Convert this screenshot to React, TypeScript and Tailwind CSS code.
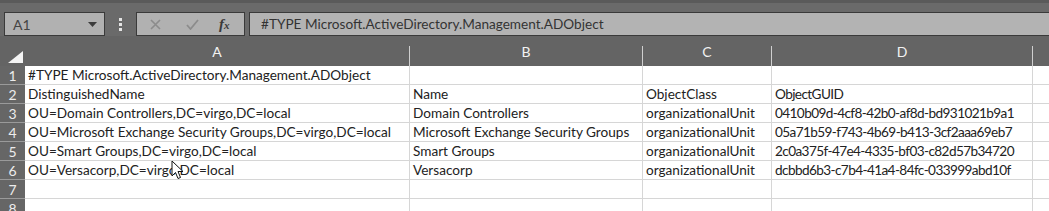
import React from 'react'

const cols = [
  { key: 'A', w: 'w-[385px]', t: '' },
  { key: 'B', w: 'w-[233px]', t: '' },
  { key: 'C', w: 'w-[129px]', t: '' },
  { key: 'D', w: 'w-[261px]', t: 'tracking-[-0.6px]' },
]

const rows: string[][] = [
  ['#TYPE Microsoft.ActiveDirectory.Management.ADObject', '', '', ''],
  ['DistinguishedName', 'Name', 'ObjectClass', 'ObjectGUID'],
  ['OU=Domain Controllers,DC=virgo,DC=local', 'Domain Controllers', 'organizationalUnit', '0410b09d-4cf8-42b0-af8d-bd931021b9a1'],
  ['OU=Microsoft Exchange Security Groups,DC=virgo,DC=local', 'Microsoft Exchange Security Groups', 'organizationalUnit', '05a71b59-f743-4b69-b413-3cf2aaa69eb7'],
  ['OU=Smart Groups,DC=virgo,DC=local', 'Smart Groups', 'organizationalUnit', '2c0a375f-47e4-4335-bf03-c82d57b34720'],
  ['OU=Versacorp,DC=virgo,DC=local', 'Versacorp', 'organizationalUnit', 'dcbbd6b3-c7b4-41a4-84fc-033999abd10f'],
  ['', '', '', ''],
  ['', '', '', ''],
]

function FormulaBar() {
  return (
    <div className="flex h-[36px] bg-[#6a6a6a] pt-[9px] border-t-[3px] border-[#5a5a5a]">
      {/* name box */}
      <div className="ml-[4px] w-[101px] h-[24px] border border-[#3a3a3a] bg-[#b1b1b1] flex items-center pl-[8px] pr-[7px] text-[14px] text-[#444]">
        <span className="flex-1">A1</span>
        <svg width="9" height="5" viewBox="0 0 9 5"><polygon points="0,0 9,0 4.5,5" fill="#3c3c3c" /></svg>
      </div>
      <div className="w-[31px] flex items-center justify-center">
        <svg width="3" height="13" viewBox="0 0 3 13">
          <rect x="0" y="0" width="3" height="3" fill="#e4e4e4" />
          <rect x="0" y="5" width="3" height="3" fill="#e4e4e4" />
          <rect x="0" y="10" width="3" height="3" fill="#e4e4e4" />
        </svg>
      </div>
      {/* cancel / enter / fx */}
      <div className="w-[109px] h-[24px] border border-[#3a3a3a] bg-[#b1b1b1] flex items-center">
        <svg className="ml-[13px]" width="11" height="11" viewBox="0 0 11 11">
          <path d="M1 1 L10 10 M10 1 L1 10" stroke="#8c8c8c" strokeWidth="1.6" fill="none" />
        </svg>
        <svg className="ml-[25px]" width="13" height="11" viewBox="0 0 13 11">
          <path d="M1 6 L4.5 10 L12 1" stroke="#8c8c8c" strokeWidth="1.8" fill="none" />
        </svg>
        <span className="ml-[20px] italic font-bold text-[#3a3a3a] text-[15px] leading-none font-['Liberation_Serif',serif]">
          f<span className="text-[11px]">x</span>
        </span>
      </div>
      <div className="ml-[4px] flex-1 h-[24px] border border-r-0 border-[#3a3a3a] bg-[#b3b3b3] flex items-center pl-[11px] text-[13.6px] text-[#333]">
        #TYPE Microsoft.ActiveDirectory.Management.ADObject
      </div>
    </div>
  )
}

function HeaderRow() {
  return (
    <div className="flex h-[30px] bg-[#646464] text-[#f2f2f2] text-[14px]">
      <div className="w-[25px] flex items-end justify-end pb-[3px] pr-[2px]">
        <svg width="15" height="12" viewBox="0 0 15 12"><polygon points="15,0 15,12 0,12" fill="#f4f4f4" /></svg>
      </div>
      {cols.map((c) => (
        <div key={c.key} className={`${c.w} flex`}>
          <div className="flex-1 flex items-end justify-center pb-[4px]">{c.key}</div>
          <div className="self-end w-px h-[20px] bg-[#cfcfcf]" />
        </div>
      ))}
      <div className="flex-1" />
    </div>
  )
}

export default function App() {
  return (
    <div className="relative w-[1049px] h-[211px] overflow-hidden bg-white font-['Lato',sans-serif]">
      <FormulaBar />
      <HeaderRow />
      {rows.map((r, i) => (
        <div key={i} className="flex h-[19px] text-[13.6px] text-[#222]">
          <div className="w-[25px] bg-[#666666] border-b border-[#9a9a9a] flex items-center justify-center text-[#ececec] text-[14px]">
            {i + 1}
          </div>
          {cols.map((c, j) => (
            <div
              key={c.key}
              className={`${c.w} ${c.t} border-b border-r border-[#d6d6d6] pl-[3px] flex items-center whitespace-nowrap overflow-hidden`}
            >
              {r[j]}
            </div>
          ))}
          <div className="flex-1 border-b border-[#d6d6d6]" />
        </div>
      ))}
      {/* mouse pointer */}
      <svg className="absolute left-[171px] top-[160px]" width="13" height="20" viewBox="0 0 13 20">
        <path d="M1 1 L1 16 L4.5 12.5 L7 18.5 L9.5 17.5 L7 11.5 L12 11.5 Z" fill="#fff" stroke="#111" strokeWidth="1" strokeLinejoin="round" />
      </svg>
    </div>
  )
}
